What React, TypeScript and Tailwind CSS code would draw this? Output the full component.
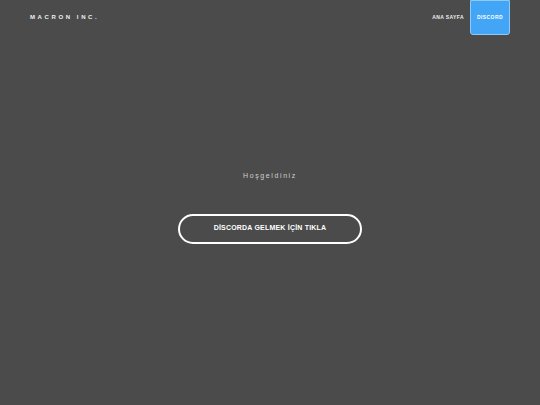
export default function App() {
  return (
    <div className="w-[540px] h-[405px] bg-[#4b4b4b] flex flex-col font-['Liberation_Sans',Arial,sans-serif] text-white">
      <header className="flex items-start justify-between pl-[30px] pr-[30px]">
        <div className="pt-[13px] text-[6px] font-bold tracking-[2.6px] text-[#eeeeee]">MACRON INC.</div>
        <nav className="flex items-start">
          <a className="pt-[14px] pl-[7px] pr-[6px] text-[5px] font-bold tracking-[0.4px] text-[#eeeeee]">ANA SAYFA</a>
          <a className="w-[40px] h-[35px] flex items-center justify-center bg-[#42a5f5] border border-[#8fc9f5] rounded-b-[3px] text-[5px] font-bold tracking-[0.4px] text-white">
            DISCORD
          </a>
        </nav>
      </header>
      <main className="flex flex-col items-center pt-[136px]">
        <p className="text-[7px] tracking-[1.6px] text-[#d0d0d0]">Hoşgeldiniz</p>
        <button className="mt-[32px] w-[184px] h-[30px] rounded-full border-2 border-white text-[7px] font-bold text-white flex items-center justify-center tracking-[0.2px]">
          DİSCORDA GELMEK İÇİN TIKLA
        </button>
      </main>
    </div>
  );
}
